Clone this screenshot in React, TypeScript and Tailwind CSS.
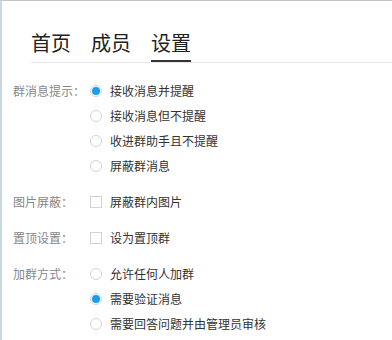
import React from "react";

const tabs = ["首页", "成员", "设置"];

interface Option {
  label: string;
  checked?: boolean;
}

interface Section {
  title: string;
  kind: "radio" | "checkbox";
  options: Option[];
}

const sections: Section[] = [
  {
    title: "群消息提示：",
    kind: "radio",
    options: [
      { label: "接收消息并提醒", checked: true },
      { label: "接收消息但不提醒" },
      { label: "收进群助手且不提醒" },
      { label: "屏蔽群消息" },
    ],
  },
  { title: "图片屏蔽：", kind: "checkbox", options: [{ label: "屏蔽群内图片" }] },
  { title: "置顶设置：", kind: "checkbox", options: [{ label: "设为置顶群" }] },
  {
    title: "加群方式：",
    kind: "radio",
    options: [
      { label: "允许任何人加群" },
      { label: "需要验证消息", checked: true },
      { label: "需要回答问题并由管理员审核" },
    ],
  },
];

function Radio({ checked }: { checked?: boolean }) {
  return (
    <span className="flex h-[12px] w-[12px] shrink-0 items-center justify-center rounded-full border border-[#cfd3d6] bg-white">
      {checked && <span className="h-[8px] w-[8px] rounded-full bg-[#1a9ded]" />}
    </span>
  );
}

function Checkbox() {
  return <span className="h-[12px] w-[12px] shrink-0 border border-[#d2d2d2] bg-white" />;
}

export default function App() {
  return (
    <div
      className="h-[340px] w-[392px] overflow-hidden border-t border-l-2 border-t-[#c4c4c4] border-l-[#c8d8e2] bg-white"
      style={{ fontFamily: '"Noto Sans CJK SC", "Noto Sans", sans-serif' }}
    >
      {/* Tabs */}
      <div className="ml-[29px] mt-[29px] flex gap-[20px] border-b border-[#e8e8e8]">
        {tabs.map((t) => (
          <div
            key={t}
            className={`border-b-2 pb-[4px] text-[20px] leading-[26px] text-[#222] ${
              t === "设置" ? "border-[#333]" : "border-transparent"
            }`}
          >
            {t}
          </div>
        ))}
      </div>

      {/* Settings */}
      <div className="mt-[15px] flex flex-col gap-[11px]">
        {sections.map((s) => (
          <div key={s.title} className="flex text-[12px]">
            <div className="w-[88px] shrink-0 whitespace-nowrap pl-[11px] leading-[25px] text-[#888]">{s.title}</div>
            <div className="flex flex-col">
              {s.options.map((o) => (
                <div key={o.label} className="flex h-[25px] items-center gap-[8px] whitespace-nowrap text-[#333]">
                  {s.kind === "radio" ? <Radio checked={o.checked} /> : <Checkbox />}
                  <span>{o.label}</span>
                </div>
              ))}
            </div>
          </div>
        ))}
      </div>
    </div>
  );
}
